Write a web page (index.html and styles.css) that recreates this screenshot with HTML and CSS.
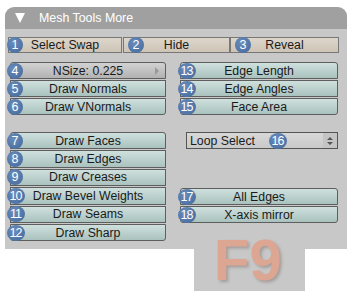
FILE: index.html
```html
<!DOCTYPE html>
<html lang="en">
<head>
<meta charset="UTF-8">
<title>Mesh Tools More</title>
<link rel="stylesheet" href="styles.css">
</head>
<body>

<div class="panel">
	<!-- cabecalho do painel -->
	<div class="header">
		<span class="tri"></span>
		<span class="title">Mesh Tools More</span>
	</div>

	<div class="body">
		<div class="row-top">
			<div class="btn tan w-swap"><span class="badge first">1</span>Select Swap</div>
			<div class="btn tan w-hide"><span class="badge in">2</span>Hide</div>
			<div class="btn tan w-rev"><span class="badge in">3</span>Reveal</div>
		</div>

		<div class="cols">
			<div class="col left">
				<div class="group">
					<div class="btn gray num"><span class="badge">4</span>NSize: 0.225<span class="arrow"></span></div>
					<div class="btn teal"><span class="badge">5</span>Draw Normals</div>
					<div class="btn teal"><span class="badge">6</span>Draw VNormals</div>
				</div>
				<div class="group g2">
					<div class="btn teal"><span class="badge">7</span>Draw Faces</div>
					<div class="btn teal"><span class="badge">8</span>Draw Edges</div>
					<div class="btn teal"><span class="badge">9</span>Draw Creases</div>
					<div class="btn teal"><span class="badge two">10</span>Draw Bevel Weights</div>
					<div class="btn teal"><span class="badge two">11</span>Draw Seams</div>
					<div class="btn teal"><span class="badge two">12</span>Draw Sharp</div>
				</div>
			</div>

			<div class="col right">
				<div class="group">
					<div class="btn teal"><span class="badge two">13</span>Edge Length</div>
					<div class="btn teal"><span class="badge two">14</span>Edge Angles</div>
					<div class="btn teal"><span class="badge two">15</span>Face Area</div>
				</div>
				<div class="select">
					<span class="sel-text">Loop Select</span>
					<span class="badge two sel-badge">16</span>
					<span class="updown">
						<svg width="8" height="10" viewBox="0 0 8 10"><path d="M1 4 L4 1 L7 4 Z M1 6 L4 9 L7 6 Z" fill="#555"/></svg>
					</span>
				</div>
				<div class="group g3">
					<div class="btn teal"><span class="badge two">17</span>All Edges</div>
					<div class="btn teal"><span class="badge two">18</span>X-axis mirror</div>
				</div>
			</div>
		</div>
	</div>
</div>

<div class="f9box">
	<span class="f9">F9</span>
</div>

</body>
</html>
```

FILE: styles.css
```css
body {
	margin: 0;
	background-color: #fff;
	font-family: "Liberation Sans", Arial, sans-serif;
}
.panel {
	margin: 7px 0 0 5px;
	width: 342px;
}
.header {
	height: 22px;
	background-color: #a0a0a0;
	border-radius: 9px 9px 0 0;
	display: flex;
	align-items: center;
	color: #fff;
	font-size: 12.4px;
}
.tri {
	width: 0;
	height: 0;
	margin-left: 10px;
	border-left: 5px solid transparent;
	border-right: 5px solid transparent;
	border-top: 10px solid #fff;
}
.title {
	margin-left: 14px;
}
.body {
	background-color: #c8c8c8;
	height: 220px;
	padding-top: 8px;
	box-sizing: border-box;
	position: relative;
	z-index: 1;
}
.row-top {
	display: flex;
	height: 16px;
	padding-left: 3px;
}
.btn {
	position: relative;
	box-sizing: border-box;
	height: 17px;
	display: flex;
	align-items: center;
	justify-content: center;
	font-size: 12.3px;
	color: #1a1a1a;
	border: 1px solid #5e5e5e;
	border-radius: 3px;
	white-space: nowrap;
}
.row-top .btn {
	height: 16px;
	border-radius: 0;
	border-color: #777;
}
.tan {
	background: linear-gradient(#ddd6cb, #cdc4b6);
}
.w-swap { width: 114px; }
.w-hide { width: 107px; margin-left: 1px; }
.w-rev { width: 109px; margin-left: 0; }
.teal {
	background: linear-gradient(#cfe0dd, #aac2be);
}
.gray {
	background: linear-gradient(#d2d2d2, #b2b2b2);
}
.arrow {
	position: absolute;
	right: 6px;
	top: 4px;
	border-top: 4px solid transparent;
	border-bottom: 4px solid transparent;
	border-left: 4px solid #999;
}
.badge {
	position: absolute;
	left: -4px;
	top: 50%;
	margin-top: -8px;
	width: 16px;
	height: 16px;
	border-radius: 50%;
	background: radial-gradient(circle at 40% 35%, #6a8cbb, #41679b);
	color: #fff;
	font-size: 12.5px;
	display: flex;
	align-items: center;
	justify-content: center;
}
.badge.first {
	left: -2px;
}
.badge.in {
	left: 4px;
}
.badge.two {
	width: 18px;
	letter-spacing: -1px;
	text-indent: -1px;
}
.cols {
	display: flex;
	margin-top: 9px;
	padding-left: 5px;
}
.col {
	display: flex;
	flex-direction: column;
}
.left { width: 156px; }
.right { width: 158px; margin-left: 14px; }
.right .badge { left: -3px; }
.group {
	display: flex;
	flex-direction: column;
	gap: 1px;
}
.group .btn {
	border-radius: 0;
}
.group .btn:first-child { border-radius: 3px 3px 0 0; }
.group .btn:last-child { border-radius: 0 0 3px 3px; }
.g2 { margin-top: 17px; }
.g2 .btn { height: 17.4px; }
.g3 { margin-top: 39px; }
.select {
	position: relative;
	margin: 17px 0 0 6px;
	height: 17px;
	box-sizing: border-box;
	border: 1px solid #555;
	background: linear-gradient(#d8d8d8, #c9c9c9);
	display: flex;
	align-items: center;
	font-size: 12.3px;
	color: #1a1a1a;
}
.sel-text {
	margin-left: 3px;
}
.select .sel-badge {
	left: 82px;
}
.updown {
	margin-left: auto;
	width: 14px;
	height: 15px;
	display: flex;
	align-items: center;
	justify-content: center;
	background-color: #c4c4c4;
}
.f9box {
	margin-left: 194px;
	width: 111px;
	height: 42px;
	background-color: #c8c8c8;
	position: relative;
}
.f9 {
	position: absolute;
	left: 20px;
	top: -18px;
	z-index: 2;
	font-weight: bold;
	font-size: 58px;
	line-height: 58px;
	color: #dda693;
	text-shadow: 2px 2px 3px rgba(80, 60, 50, 0.3);
}
```
